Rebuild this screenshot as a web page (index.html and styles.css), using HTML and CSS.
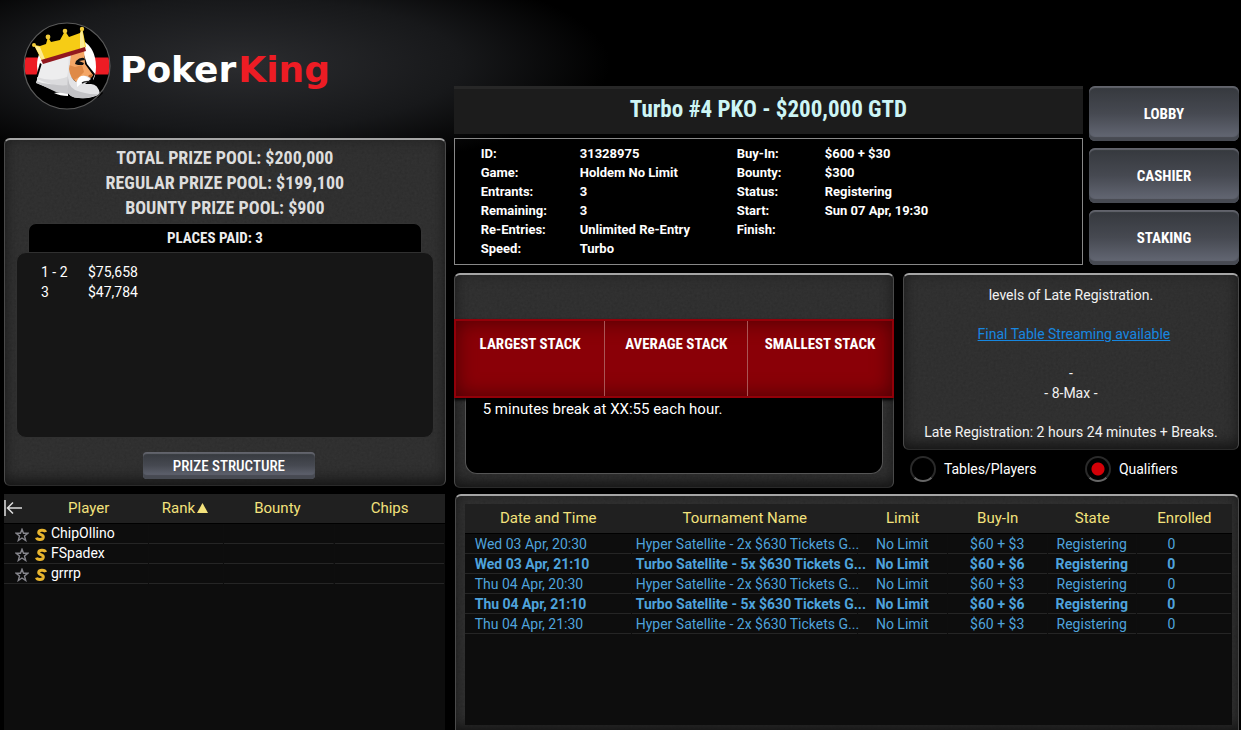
FILE: index.html
```html
<!DOCTYPE html>
<html lang="en">
  <head>
    <meta charset="UTF-8" />
    <meta name="viewport" content="width=device-width, initial-scale=1.0" />
    <title>PokerKing - Tournament Lobby</title>
    <link rel="stylesheet" href="styles.css" />
  </head>
  <body>
    <div class="lobby">
      <div class="left">
        <header class="brand">
          <svg class="brand-mark" viewBox="0 0 88 88" aria-hidden="true">
            <circle cx="44" cy="44" r="43" fill="#000" />
            <path d="M2.500 35.500h83q2 8 0 17h-83q-2-9 0-17z" fill="#ed1c24" />
            <path d="M14 44q0-16 12-23l33-3q14 8 14 27 0 10-5 17l-24 12-18-6q-12-9-12-24z" fill="#fff" />
            <!-- black backing of the head -->
            <path d="M17 41L11 61l1 3 19 8v2h14l-8-20z" fill="#000" />
            <path d="M60 30l4 12 8 10-2 5 2 4 8 10-5 5H55l-10-2-8-40z" fill="#000" />
            <path d="M31 71l14-2v5q-8 0-14-3z" fill="#fff" />
            <!-- hair -->
            <path d="M19 41l29-9v30l-3 10-12-3-20-8z" fill="#ededee" />
            <path d="M13 59q16 7 33-1l-1 14-12-2-19-9z" fill="#c6c6c9" />
            <path d="M14 55q16 6 32-1v9q-15 2-32-6z" fill="#dbdbdd" />
            <!-- face -->
            <path d="M47 33l14-5 1 14 8 11q-1 3-5 3l-5 3-7 1-7-7z" fill="#f5a766" />
            <path d="M46 43l6 2 7-2 2 7-5 5-5 3-5-6z" fill="#df8a47" />
            <path d="M53 39q4-4 8-3l1 2-6 1 5 2-1 2-5 0-3-1z" fill="#111" />
            <path d="M66 53l4-1-2 4-4 0z" fill="#b9652c" />
            <!-- beard -->
            <path d="M46 31l2 2-2 14q1 9 7 13l6-6q6-1 9 3l-6 5 6 0q7 0 9 10-8 5-21 4-10 0-12-8z" fill="#e3e3e5" />
            <path d="M45 50q-1 14 7 18 12 5 24 4-8 5-21 4-9-1-11-7z" fill="#c3c3c6" />
            <path d="M54 59q2-6 8-5l5 3-7 3-6 5z" fill="#fff" />
            <path d="M59 61q4-2 8-1" stroke="#222" stroke-width="1.400" fill="none" />
            <!-- crown -->
            <path d="M11 23l6 1 6-2 2-7 3 5 9-2 5-9 4 6 11-4 2-6 4 20-44 14z" fill="#f6cc15" />
            <path d="M11 23l6 2 5 12-3 1z" fill="#fdeb92" />
            <path d="M57 12l2-6 3 19-5 2z" fill="#fdeb92" />
            <path d="M18 38l44-13 1 4-43 13z" fill="#92181f" />
            <g fill="#f0cb3a">
              <circle cx="11" cy="23" r="2" />
              <circle cx="25" cy="15" r="2.400" />
              <circle cx="42" cy="9" r="2.300" />
              <circle cx="59" cy="7" r="2.200" />
            </g>
            <circle cx="44" cy="44" r="43" fill="none" stroke="#5a5a5a" stroke-width="1.200" />
          </svg>
          <div class="brand-name">Poker<span>King</span></div>
        </header>

        <section class="panel prize">
          <h2>TOTAL PRIZE POOL: $200,000</h2>
          <h2>REGULAR PRIZE POOL: $199,100</h2>
          <h2>BOUNTY PRIZE POOL: $900</h2>
          <div class="places">PLACES PAID: 3</div>
          <div class="payouts">
            <table>
              <tr><td>1 - 2</td><td>$75,658</td></tr>
              <tr><td>3</td><td>$47,784</td></tr>
            </table>
          </div>
          <button type="button" class="btn btn-small">PRIZE STRUCTURE</button>
        </section>

        <section class="players">
          <table class="grid">
            <colgroup>
              <col class="c-player" /><col class="c-rank" /><col class="c-bounty" /><col />
            </colgroup>
            <thead>
              <tr>
                <th>
                  <button type="button" class="collapse" aria-label="Collapse">
                    <svg viewBox="0 0 18 16"><path d="M1 0v16M3 8h15M9 2.500L3.500 8 9 13.500" /></svg>
                  </button>
                  Player
                </th>
                <th>Rank<svg class="sort" viewBox="0 0 11 10"><path d="M5.500 0L11 10H0z" /></svg></th>
                <th>Bounty</th>
                <th>Chips</th>
              </tr>
            </thead>
            <tbody id="players"></tbody>
          </table>
        </section>
      </div>

      <div class="right">
        <div class="top">
          <div class="info">
            <h1>Turbo #4 PKO - $200,000 GTD</h1>
            <div class="details">
              <dl>
                <dt>ID:</dt><dd>31328975</dd>
                <dt>Game:</dt><dd>Holdem No Limit</dd>
                <dt>Entrants:</dt><dd>3</dd>
                <dt>Remaining:</dt><dd>3</dd>
                <dt>Re-Entries:</dt><dd>Unlimited Re-Entry</dd>
                <dt>Speed:</dt><dd>Turbo</dd>
              </dl>
              <dl class="second">
                <dt>Buy-In:</dt><dd>$600 + $30</dd>
                <dt>Bounty:</dt><dd>$300</dd>
                <dt>Status:</dt><dd>Registering</dd>
                <dt>Start:</dt><dd>Sun 07 Apr, 19:30</dd>
                <dt>Finish:</dt><dd></dd>
              </dl>
            </div>
          </div>
          <nav class="actions">
            <button type="button" class="btn">LOBBY</button>
            <button type="button" class="btn">CASHIER</button>
            <button type="button" class="btn">STAKING</button>
          </nav>
        </div>

        <div class="middle">
          <section class="panel stacks">
            <div class="stack-bar">
              <div>LARGEST STACK</div>
              <div>AVERAGE STACK</div>
              <div>SMALLEST STACK</div>
            </div>
            <div class="break">5 minutes break at XX:55 each hour.</div>
          </section>
          <div class="side">
            <section class="panel notes">
              <p>levels of Late Registration.</p>
              <p class="stream"><a href="#">Final Table Streaming available</a></p>
              <p>-<br />- 8-Max -</p>
              <p>Late Registration: 2 hours 24 minutes + Breaks.</p>
            </section>
            <div class="views">
              <label><input type="radio" name="view" />Tables/Players</label>
              <label><input type="radio" name="view" checked />Qualifiers</label>
            </div>
          </div>
        </div>

        <section class="panel qualifiers">
          <div class="sheet">
            <table class="grid">
              <colgroup>
                <col class="c-date" /><col class="c-name" /><col class="c-limit" /><col class="c-buyin" /><col class="c-state" /><col />
              </colgroup>
              <thead>
                <tr>
                  <th>Date and Time</th>
                  <th>Tournament Name</th>
                  <th>Limit</th>
                  <th>Buy-In</th>
                  <th>State</th>
                  <th>Enrolled</th>
                </tr>
              </thead>
              <tbody id="qualifiers"></tbody>
            </table>
          </div>
        </section>
      </div>
    </div>

    <script>
      const players = ["ChipOllino", "FSpadex", "grrrp"];

      const hyper = ["Hyper Satellite - 2x $630 Tickets G...", "$60 + $3"];
      const turbo = ["Turbo Satellite - 5x $630 Tickets G...", "$60 + $6"];
      const qualifiers = [
        ["Wed 03 Apr, 20:30", hyper],
        ["Wed 03 Apr, 21:10", turbo],
        ["Thu 04 Apr, 20:30", hyper],
        ["Thu 04 Apr, 21:10", turbo],
        ["Thu 04 Apr, 21:30", hyper],
      ];

      document.getElementById("players").innerHTML = players
        .map(
          (name) => `
          <tr>
            <td><div class="player">
              <svg class="star" viewBox="0 0 14 14"><path d="M7 1.300l1.500 4h4.300L9.500 8l1.200 4.500L7 10l-3.700 2.500L4.500 8 1.200 5.300h4.300z" /></svg>
              <svg class="chip" viewBox="0 0 12 14"><path d="M10.500 4.200C10 2 4.300 1.300 3.700 4.400 3.200 7.200 8.700 6.200 8.300 9.200 7.800 12.300 2.200 12.200 1.500 9.600" /></svg>
              ${name}
            </div></td>
            <td></td><td></td><td></td>
          </tr>`
        )
        .join("");

      document.getElementById("qualifiers").innerHTML = qualifiers
        .map(
          ([date, [name, buyIn]]) => `
          <tr class="${name.startsWith("Turbo") ? "turbo" : ""}">
            <td>${date}</td>
            <td>${name}</td>
            <td>No Limit</td>
            <td>${buyIn}</td>
            <td>Registering</td>
            <td>0</td>
          </tr>`
        )
        .join("");
    </script>
  </body>
</html>
```

FILE: styles.css
```css
* {
  box-sizing: border-box;
}
body {
  margin: 0;
  background: #000 radial-gradient(ellipse 370px 110px at 240px 64px, #2b2c2f, #17181a 60%, #000) no-repeat;
  color: #fff;
  font-family: Roboto, "Liberation Sans", sans-serif;
  font-size: 14px;
}
h1,
h2,
p,
dl,
dd {
  margin: 0;
}
h1,
h2,
.places,
.btn,
.stack-bar {
  font-family: "Roboto Condensed", Roboto, sans-serif;
  font-weight: bold;
}
.lobby {
  display: grid;
  grid-template-columns: 9fr 16fr;
  gap: 8px;
  min-height: 100vh;
  padding: 0 2px 0 4px;
}
.left,
.right {
  display: flex;
  flex-direction: column;
  min-width: 0;
}
.right {
  padding-top: 86px;
  gap: 8px;
}

.panel {
  background-color: #2b2b2b;
  background-image: url("data:image/svg+xml,%3Csvg xmlns='http://www.w3.org/2000/svg' width='160' height='160'%3E%3Cfilter id='n'%3E%3CfeTurbulence type='fractalNoise' baseFrequency='.4' numOctaves='2' stitchTiles='stitch'/%3E%3CfeColorMatrix type='saturate' values='0'/%3E%3C/filter%3E%3Crect width='160' height='160' filter='url(%23n)' opacity='.06'/%3E%3C/svg%3E");
  border: 1px solid #4a4a4a;
  border-top: 2px solid #a5a5a5;
  border-bottom-color: #2a2a2a;
  border-radius: 6px;
  box-shadow: inset 0 -10px 14px -6px #151515, inset 0 0 12px #222;
}

.btn {
  border: 0;
  border-radius: 6px;
  background: linear-gradient(#35383d, #464951 50%, #676b78);
  box-shadow: inset 0 2px 1px #62646c, inset 0 -4px 1px #474a52;
  color: #fff;
  font-size: 15px;
  cursor: pointer;
}
.btn:hover {
  background: linear-gradient(#41444a, #53565f 50%, #757987);
}

/* logo */
.brand {
  display: flex;
  align-items: center;
  height: 138px;
  padding: 0 0 6px 19px;
  gap: 9px;
}
.brand-mark {
  width: 88px;
  height: 88px;
}
.brand-name {
  padding-top: 6px;
  font: bold 36px "DejaVu Sans", sans-serif;
}
.brand-name span {
  margin-left: 2px;
  color: #ed1c24;
}

/* prizes */
.prize {
  display: flex;
  flex-direction: column;
  height: 348px;
  padding: 5px 11px 6px;
}
.prize h2 {
  color: #ddd;
  font-size: 18px;
  line-height: 25px;
  text-align: center;
}
.places {
  margin: 3px 12px 0;
  padding-right: 20px;
  background: #000;
  border: 1px solid #333;
  border-bottom: 0;
  border-radius: 8px 8px 0 0;
  color: #eee;
  font-size: 15px;
  line-height: 28px;
  text-align: center;
}
.payouts {
  flex: 1;
  padding: 9px 24px;
  background: #161616;
  border: 1px solid #303030;
  border-radius: 10px;
}
.payouts table {
  border-collapse: collapse;
}
.payouts td {
  padding: 0;
  line-height: 20px;
}
.payouts td:first-child {
  width: 47px;
}
.btn-small {
  align-self: center;
  width: 172px;
  height: 27px;
  margin: 14px 0 0 8px;
  padding: 0;
  border-radius: 4px;
  font-weight: 500;
}

/* tables */
.grid {
  width: 100%;
  table-layout: fixed;
  border-collapse: separate;
  border-spacing: 0;
}
.grid th {
  height: 30px;
  padding: 0 0 2px;
  background: #202020;
  border-bottom: 1px solid #000;
  color: #f3e27c;
  font-size: 15px;
  font-weight: normal;
}
.grid td {
  height: 20px;
  padding: 0;
  border-right: 1px solid #0e0e0e;
  background: linear-gradient(#252525, #252525) bottom / 100% 1px no-repeat padding-box;
  line-height: 18px;
  white-space: nowrap;
}
.players {
  flex: 1;
  margin: 8px 1px 0 0;
  background: #0d0d0d;
}
.c-player {
  width: 33%;
}
.c-rank {
  width: 17%;
}
.c-bounty {
  width: 25%;
}
.players th:first-child {
  position: relative;
  padding-left: 24px;
}
.players th:nth-child(2),
.players th:nth-child(3) {
  padding-right: 4px;
}
.players td {
  padding-bottom: 2px;
}
.collapse {
  position: absolute;
  left: 0;
  top: 6px;
  padding: 0;
  border: 0;
  background: none;
}
.collapse svg {
  display: block;
  width: 18px;
  height: 16px;
  fill: none;
  stroke: #ddd;
  stroke-width: 1.5;
}
.sort {
  width: 11px;
  height: 10px;
  margin-left: 2px;
  fill: #f3e27c;
}
.player {
  display: flex;
  align-items: center;
  height: 18px;
  padding-left: 11px;
}
.star {
  width: 14px;
  height: 14px;
  margin: 3px 6px 0 0;
  fill: none;
  stroke: #85858c;
  stroke-width: 1.4;
}
.chip {
  width: 12px;
  height: 14px;
  margin: 3px 4px 0 0;
  fill: none;
  stroke: #e8b52f;
  stroke-width: 3;
}

/* tournament info */
.top {
  display: flex;
  gap: 6px;
}
.info {
  flex: 1;
}
.info h1 {
  margin-bottom: 4px;
  background: #1c1c1c;
  border-top: 3px solid #272727;
  color: #cdf5f5;
  font-size: 23px;
  line-height: 41px;
  padding-bottom: 4px;
  text-align: center;
}
.details {
  display: flex;
  height: 127px;
  padding: 5px 26px;
  border: 1px solid #888;
  font-weight: bold;
  font-size: 13px;
  line-height: 19px;
}
.details dl {
  display: grid;
  grid-template-columns: 99px 1fr;
  grid-auto-rows: 19px;
  flex: 0 0 256px;
}
.details .second {
  grid-template-columns: 88px 1fr;
  flex: 1;
}
.actions {
  display: flex;
  flex-direction: column;
  gap: 7px;
  width: 150px;
}
.actions .btn {
  flex: 1;
}

/* stacks and notes */
.middle {
  display: grid;
  grid-template-columns: 440fr 336fr;
  gap: 9px;
  height: 213px;
}
.stacks {
  display: flex;
  flex-direction: column;
  padding: 44px 0 13px;
}
.stack-bar {
  display: grid;
  grid-template-columns: 150fr 144fr 146fr;
  flex: 0 0 79px;
  margin: 0 -1px;
  background: #8a0007;
  border: 2px solid #920009;
  box-shadow: inset 0 0 20px #4a0004, 0 2px 3px #000;
  font-size: 15px;
  line-height: 18px;
  text-align: center;
  z-index: 1;
}
.stack-bar div {
  padding-top: 14px;
}
.stack-bar div + div {
  border-left: 1px solid #a55;
}
.break {
  flex: 1;
  margin: 0 10px;
  padding: 2px 17px;
  background: #000;
  border: 1px solid #555;
  border-top: 0;
  border-radius: 0 0 12px 12px;
  font-size: 15px;
  line-height: 18px;
}
.side {
  display: flex;
  flex-direction: column;
}
.notes {
  height: 177px;
  padding-top: 10px;
  color: #f2f2f2;
  line-height: 20px;
  text-align: center;
}
.notes p + p {
  margin-top: 19px;
}
.notes a {
  color: #1787e0;
}
.notes .stream {
  padding-left: 6px;
}
.views {
  display: grid;
  grid-template-columns: 175px 1fr;
  padding: 6px 7px;
}
.views label {
  display: flex;
  align-items: center;
  gap: 8px;
}
.views input {
  appearance: none;
  width: 26px;
  height: 26px;
  margin: 0;
  border: 2px solid #2a2a2a;
  border-bottom-color: #666;
  border-radius: 50%;
  background: #000;
}
.views input:checked {
  background: radial-gradient(circle, #d40007 6px, #000 7px);
}

/* qualifiers */
.qualifiers {
  flex: 1;
  display: flex;
  margin-left: 1px;
  padding: 8px 6px 5px 9px;
  border-bottom: 0;
  border-radius: 6px 6px 0 0;
}
.sheet {
  flex: 1;
  background: #0d0d0d;
}
.qualifiers td {
  color: #4fa3dc;
  text-align: center;
}
.qualifiers td:first-child {
  padding-left: 10px;
  text-align: left;
}
.qualifiers td:nth-child(2) {
  padding-left: 4px;
  text-align: left;
}
.qualifiers td:last-child {
  padding-right: 25px;
}
.qualifiers .turbo {
  font-weight: bold;
}
.c-date {
  width: 167px;
}
.c-name {
  width: 226px;
}
.c-limit {
  width: 90px;
}
.c-buyin {
  width: 100px;
}
.c-state {
  width: 89px;
}
```
